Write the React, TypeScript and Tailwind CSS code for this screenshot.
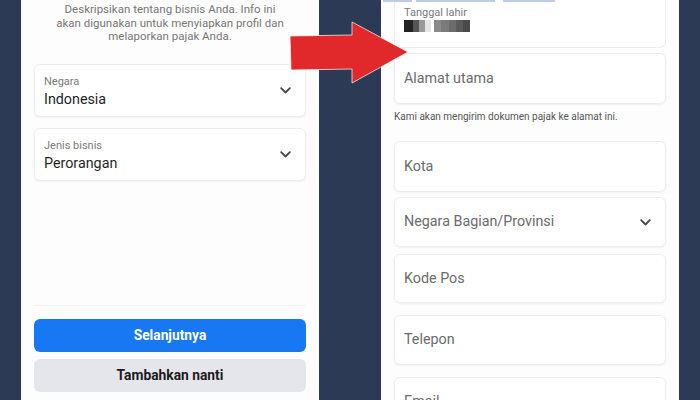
import React from "react";

function Chevron() {
  return (
    <svg width="11" height="7" viewBox="0 0 11 7" fill="none">
      <path d="M1.2 1.2l4.3 4.3 4.3-4.3" stroke="#4a4a4a" strokeWidth="1.9" strokeLinecap="round" strokeLinejoin="round" />
    </svg>
  );
}

function SelectBox({ label, value, className }: { label: string; value: string; className?: string }) {
  return (
    <div
      className={`flex h-[53px] shrink-0 items-center justify-between rounded-md border border-[#eeeeee] bg-white pl-[9px] pr-[14px] shadow-[0_1px_2px_rgba(0,0,0,0.05)] ${className ?? ""}`}
    >
      <div className="flex flex-col pt-[2px]">
        <span className="text-[11px] leading-[13px] text-[#7a7a7a]">{label}</span>
        <span className="mt-[2px] text-[14.3px] leading-[18px] text-[#1f1f1f]">{value}</span>
      </div>
      <Chevron />
    </div>
  );
}

function InputBox({ label, chevron, className }: { label: string; chevron?: boolean; className?: string }) {
  return (
    <div
      className={`flex shrink-0 items-center justify-between rounded-md border border-[#eeeeee] bg-white pl-[9px] pr-[14px] shadow-[0_1px_2px_rgba(0,0,0,0.05)] ${className ?? ""}`}
    >
      <span className="text-[14.3px] text-[#6b6b6b]">{label}</span>
      {chevron ? <Chevron /> : null}
    </div>
  );
}

function Arrow() {
  return (
    <svg className="pointer-events-none absolute left-[287px] top-[19px]" width="126" height="68" viewBox="0 0 126 68">
      <polygon
        points="3,17 65,16 65,3 121,33 65,64 65,50 4,51"
        fill="#e1282a"
        stroke="#ffffff"
        strokeOpacity="0.7"
        strokeWidth="1"
        strokeLinejoin="miter"
      />
    </svg>
  );
}

export default function App() {
  return (
    <div className="relative flex h-[400px] w-[700px] overflow-hidden bg-[#2c3a55] font-['Roboto','Liberation_Sans',sans-serif]">
      {/* left phone */}
      <section className="ml-[21px] flex h-full w-[298px] flex-col bg-[#fdfdfd] px-[13px]">
        <p className="pt-[3px] text-center text-[11.5px] leading-[13.5px] text-[#777777]">
          Deskripsikan tentang bisnis Anda. Info ini
          <br />
          akan digunakan untuk menyiapkan profil dan
          <br />
          melaporkan pajak Anda.
        </p>
        <SelectBox className="mt-[20px]" label="Negara" value="Indonesia" />
        <SelectBox className="mt-[11px]" label="Jenis bisnis" value="Perorangan" />
        <div className="mt-auto mb-[8px] flex flex-col gap-[7px] border-t border-[#f4f4f4] pt-[13px]">
          <button className="h-[33px] rounded-md bg-[#1877f2] text-[13.8px] font-bold text-white">Selanjutnya</button>
          <button className="h-[33px] rounded-md bg-[#e5e6eb] text-[13.8px] font-bold text-[#1c1c1c]">
            Tambahkan nanti
          </button>
        </div>
      </section>

      {/* right phone */}
      <section className="relative ml-[62px] flex h-full w-[298px] flex-col bg-[#fdfdfd] px-[13px]">
        <div className="absolute left-[2px] top-0 flex h-[2px] gap-[4px]">
          <div className="w-[29px] bg-[#bccdec]" />
          <div className="w-[79px] bg-[#bccdec]" />
          <div className="ml-[4px] w-[52px] bg-[#bccdec]" />
        </div>
        <div className="h-[48px] shrink-0 rounded-b-md border-x border-b border-[#eeeeee] bg-white pl-[9px] pt-[6px]">
          <div className="text-[11px] leading-[13px] text-[#7a7a7a]">Tanggal lahir</div>
          <div className="mt-[1px] flex h-[12px]">
            <div className="w-[9px] bg-[#222222]" />
            <div className="w-[6px] bg-[#555555]" />
            <div className="w-[6px] bg-[#9a9a9a]" />
            <div className="w-[6px] bg-[#e6e6e6]" />
            <div className="ml-[3px] w-[7px] bg-[#8a8a8a]" />
            <div className="w-[8px] bg-[#7a7a7a]" />
            <div className="w-[7px] bg-[#6c6c6c]" />
            <div className="w-[7px] bg-[#5a5a5a]" />
            <div className="w-[7px] bg-[#4a4a4a]" />
          </div>
        </div>
        <InputBox className="mt-[5px] h-[51px]" label="Alamat utama" />
        <p className="mt-[7px] shrink-0 text-[10px] leading-[12px] text-[#555555]">
          Kami akan mengirim dokumen pajak ke alamat ini.
        </p>
        <InputBox className="mt-[18px] h-[51px]" label="Kota" />
        <InputBox className="mt-[5px] h-[50px]" label="Negara Bagian/Provinsi" chevron />
        <InputBox className="mt-[7px] h-[49px]" label="Kode Pos" />
        <InputBox className="mt-[12px] h-[50px]" label="Telepon" />
        <InputBox className="mt-[12px] h-[50px]" label="Email" />
      </section>

      <Arrow />
    </div>
  );
}
